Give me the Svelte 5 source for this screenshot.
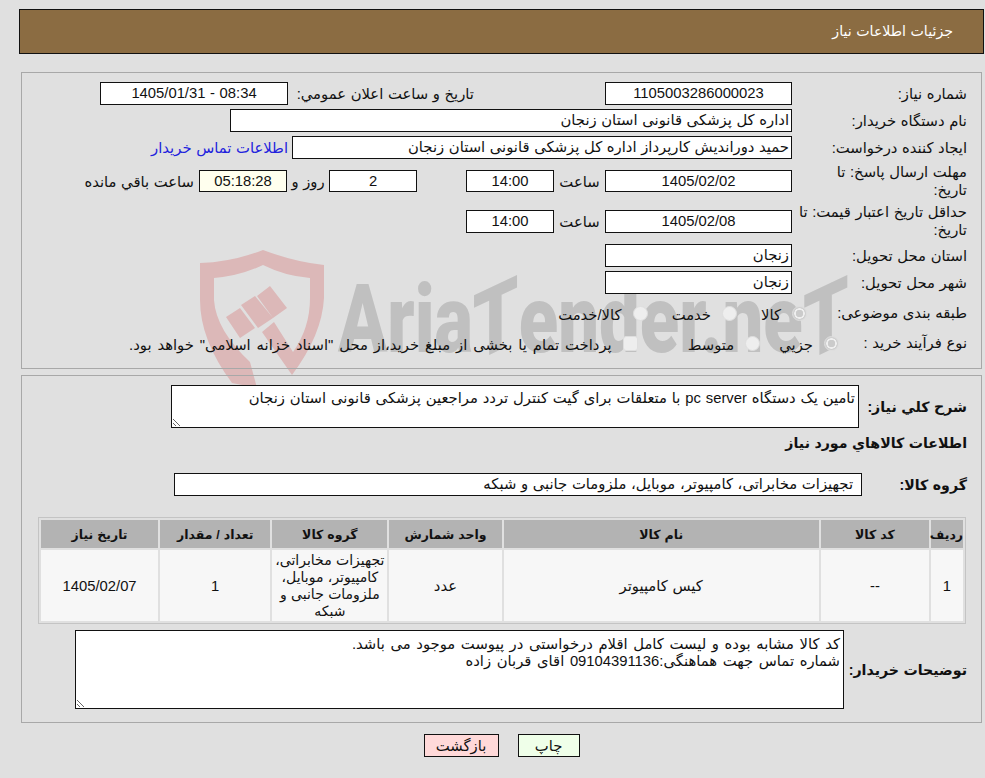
<script>
  const products = [
    {
      row: "1",
      code: "--",
      name: "کیس کامپیوتر",
      unit: "عدد",
      group: "تجهیزات مخابراتی، کامپیوتر، موبایل، ملزومات جانبی و شبکه",
      qty: "1",
      date: "1405/02/07"
    }
  ];
</script>

<main>
  <!-- watermark is behind the form -->
  <div class="mark" aria-hidden="true">
    <svg class="shield" viewBox="195 245 135 150" width="135" height="150">
      <path fill="#dcb8b8" d="M200 263 Q232 262 263 250 Q295 262 324 265 L324 298 Q322 335 292 375 L262 332 L274 322 L293 352 Q310 328 310 298 L310 278 Q285 276 263 265 Q240 276 214 278 L214 300 Q216 330 250 362 L257 388 L232 383 Q200 340 200 300 Z" />
      <path fill="#dcb8b8" d="M226 317 L240 308 L255 328 L240 338 Z M241 305 L255 296 L273 318 L258 328 Z M257 296 L270 286 L287 308 L273 318 Z" />
    </svg>
    <div class="word">Aria<span class="slant">T</span>ender.ne<span class="slant">T</span></div>
  </div>

  <header class="title">جزئیات اطلاعات نیاز</header>

  <section class="panel top">
    <div class="row r1">
      <div class="lbl">شماره نیاز:</div>
      <div class="box w187 c">1105003286000023</div>
      <div class="lbl2">تاریخ و ساعت اعلان عمومي:</div>
      <div class="box w188 c">08:34 - 1405/01/31</div>
    </div>
    <div class="row r1">
      <div class="lbl">نام دستگاه خریدار:</div>
      <div class="box w562">اداره کل پزشکی قانونی استان زنجان</div>
    </div>
    <div class="row r1">
      <div class="lbl">ایجاد کننده درخواست:</div>
      <div class="box w500">حمید دوراندیش کارپرداز اداره کل پزشکی قانونی استان زنجان</div>
      <a href="#contact" class="contact">اطلاعات تماس خریدار</a>
    </div>
    <div class="row r2">
      <div class="lbl">مهلت ارسال پاسخ: تا<br />تاریخ:</div>
      <div class="box w187 c h22">1405/02/02</div>
      <div class="unit">ساعت</div>
      <div class="box w88 c h22">14:00</div>
      <div class="spacer"></div>
      <div class="box w88 c h22">2</div>
      <div class="days">روز و</div>
      <div class="box w88 c h22 clock">05:18:28</div>
      <div class="left">ساعت باقي مانده</div>
    </div>
    <div class="row r2 last2">
      <div class="lbl">حداقل تاریخ اعتبار قیمت: تا<br />تاریخ:</div>
      <div class="box w187 c">1405/02/08</div>
      <div class="unit">ساعت</div>
      <div class="box w88 c">14:00</div>
    </div>
    <div class="row r1">
      <div class="lbl">استان محل تحویل:</div>
      <div class="box w187">زنجان</div>
    </div>
    <div class="row r1 last1">
      <div class="lbl">شهر محل تحویل:</div>
      <div class="box w187">زنجان</div>
    </div>
    <div class="row r3">
      <div class="lbl l8">طبقه بندی موضوعی:</div>
      <label class="opt"><input type="radio" name="cat" checked disabled /><span>کالا</span></label>
      <label class="opt m24"><input type="radio" name="cat" disabled /><span>خدمت</span></label>
      <label class="opt m24"><input type="radio" name="cat" disabled /><span>کالا/خدمت</span></label>
    </div>
    <div class="row r3">
      <div class="lbl l9">نوع فرآیند خرید :</div>
      <label class="opt"><input type="radio" name="kind" checked disabled /><span>جزيي</span></label>
      <label class="opt m19"><input type="radio" name="kind" disabled /><span>متوسط</span></label>
      <label class="opt m50"><input type="checkbox" disabled /><span class="wide">پرداخت تمام یا بخشی از مبلغ خرید،از محل "اسناد خزانه اسلامی" خواهد بود.</span></label>
    </div>
  </section>

  <section class="panel bottom">
    <div class="row desc">
      <div class="lbl b">شرح کلي نياز:</div>
      <textarea class="area a1" readonly>تامین یک دستگاه pc server با متعلقات برای گیت کنترل تردد مراجعین پزشکی قانونی استان زنجان</textarea>
    </div>
    <h3>اطلاعات کالاهاي مورد نياز</h3>
    <div class="row grp">
      <div class="lbl b">گروه کالا:</div>
      <div class="box w688">تجهیزات مخابراتی، کامپیوتر، موبایل، ملزومات جانبی و شبکه</div>
    </div>
    <table>
      <thead>
        <tr>
          <th class="c1">ردیف</th>
          <th class="c2">کد کالا</th>
          <th class="c3">نام کالا</th>
          <th class="c4">واحد شمارش</th>
          <th class="c5">گروه کالا</th>
          <th class="c6">تعداد / مقدار</th>
          <th class="c7">تاریخ نیاز</th>
        </tr>
      </thead>
      <tbody>
        {#each products as p}
          <tr>
            <td>{p.row}</td>
            <td>{p.code}</td>
            <td>{p.name}</td>
            <td>{p.unit}</td>
            <td class="tight">{p.group}</td>
            <td>{p.qty}</td>
            <td>{p.date}</td>
          </tr>
        {/each}
      </tbody>
    </table>
    <div class="row notes">
      <div class="lbl b">توضیحات خریدار:</div>
      <textarea class="area a2" readonly>کد کالا مشابه بوده و لیست کامل اقلام درخواستی در پیوست موجود می باشد.
شماره تماس جهت هماهنگی:09104391136 اقای قربان زاده</textarea>
    </div>
  </section>

  <div class="actions">
    <button class="print">چاپ</button>
    <button class="back">بازگشت</button>
  </div>
</main>

<style>
  :global(body) {
    margin: 0;
    background: #e0e0e0;
  }
  main {
    position: relative;
    z-index: 0;
    height: 778px;
    overflow: hidden;
    padding: 9px 1px 0 19px;
    box-sizing: border-box;
    direction: rtl;
    font-family: "Liberation Sans", "DejaVu Sans", sans-serif;
    font-size: 14.8px;
    word-spacing: 0.5px;
    color: #111;
  }
  .title {
    height: 43px;
    line-height: 43px;
    border: 1px solid #111;
    background: #8b6c42;
    color: #fff;
    padding-right: 30px;
    font-size: 14.2px;
  }
  .panel {
    width: 961px;
    margin-right: 2px;
    border: 1px solid #a8a8a8;
    box-sizing: border-box;
    padding-right: 14px;
  }
  .top {
    margin-top: 18px;
    height: 297px;
    padding-top: 9px;
  }
  .bottom {
    margin-top: 6px;
    height: 348px;
    padding-top: 9px;
  }
  .row {
    display: flex;
    align-items: center;
  }
  .r1 {
    height: 23px;
    margin-bottom: 4px;
  }
  .r2 {
    height: 36px;
    margin-bottom: 4px;
  }
  .last2 {
    margin-bottom: 5px;
  }
  .last1 {
    margin-bottom: 6px;
  }
  .r3 {
    height: 26px;
    margin-bottom: 4px;
  }
  .lbl {
    width: 175px;
    flex: none;
    line-height: 18px;
    white-space: nowrap;
  }
  .lbl.l8 {
    width: 160px;
  }
  .lbl.l9 {
    width: 128px;
  }
  .lbl.b,
  h3 {
    font-weight: bold;
    font-size: 14.2px;
  }
  .lbl2 {
    margin-right: 131px;
    width: 186px;
    flex: none;
    white-space: nowrap;
  }
  .box {
    height: 23px;
    line-height: 21px;
    border: 1px solid #111;
    background: #fff;
    box-sizing: border-box;
    padding: 0 2px;
    flex: none;
    white-space: nowrap;
    overflow: hidden;
  }
  .c {
    text-align: center;
  }
  .h22 {
    height: 22px;
    line-height: 20px;
  }
  .w187 {
    width: 187px;
  }
  .w188 {
    width: 188px;
  }
  .w88 {
    width: 88px;
  }
  .w500 {
    width: 500px;
  }
  .w562 {
    width: 562px;
  }
  .w688 {
    width: 688px;
    margin-right: 15px;
    padding-right: 8px;
  }
  .unit {
    width: 51px;
    text-align: center;
    flex: none;
  }
  .spacer {
    width: 49px;
    flex: none;
  }
  .days {
    width: 42px;
    text-align: center;
    flex: none;
  }
  .clock {
    background: #ffffee;
  }
  .left {
    margin-right: 5px;
    white-space: nowrap;
  }
  .contact {
    color: #2222dd;
    text-decoration: none;
    margin-right: 4px;
    white-space: nowrap;
  }
  .opt {
    display: flex;
    align-items: center;
    gap: 11px;
    white-space: nowrap;
  }
  .m24 {
    margin-right: 24px;
  }
  .m19 {
    margin-right: 19px;
  }
  .m50 {
    margin-right: 50px;
  }
  .opt span {
    padding-top: 3px;
  }
  .opt .wide {
    word-spacing: 1.8px;
  }
  /* disabled inputs show up pale on the grey page */
  .opt input {
    appearance: none;
    margin: 0;
    width: 15px;
    height: 15px;
    box-sizing: border-box;
    background: #eeeeee;
    border: 1px solid #dedede;
    border-radius: 50%;
  }
  .opt input[type="checkbox"] {
    border-radius: 3px;
  }
  .opt input:checked {
    background: radial-gradient(circle, #cbcbcb 0 3.5px, #efefef 4px 5px, #cfcfcf 5.5px 6.5px);
  }
  .desc {
    height: 43px;
  }
  .area {
    border: 1px solid #111;
    background: #fff;
    font: inherit;
    color: inherit;
    margin: 0;
    padding: 3px;
    box-sizing: border-box;
    resize: both;
    overflow: hidden;
    outline: none;
  }
  .a1 {
    width: 688px;
    height: 43px;
    word-spacing: 0.75px;
  }
  .desc .lbl {
    width: 108px;
  }
  h3 {
    margin: 0;
    height: 30px;
    line-height: 30px;
  }
  .grp {
    margin-top: 15px;
    height: 23px;
  }
  .grp .lbl {
    width: 90px;
  }
  table {
    margin-top: 21px;
    margin-right: 1px;
    width: 928px;
    table-layout: fixed;
    border-collapse: separate;
    border-spacing: 2px;
    border: 1px solid #c4c4c4;
  }
  th {
    height: 28px;
    padding: 0;
    background: #b3b3b3;
    font-weight: bold;
    font-size: 12.5px;
    white-space: nowrap;
  }
  td {
    height: 71px;
    padding: 0;
    background: #f7f7f7;
    text-align: center;
  }
  .tight {
    line-height: 17px;
    font-size: 14px;
  }
  .c1 { width: 32px; }
  .c2 { width: 108px; }
  .c3 { width: 315px; }
  .c4 { width: 112px; }
  .c5 { width: 115px; }
  .c6 { width: 110px; }
  .c7 { width: 117px; }
  .notes {
    margin-top: 6px;
    height: 79px;
  }
  .notes .lbl {
    width: 123px;
  }
  .a2 {
    width: 769px;
    height: 79px;
    line-height: 17px;
    padding-top: 5px;
    word-spacing: 1.5px;
  }
  .actions {
    display: flex;
    justify-content: center;
    gap: 19px;
    margin: 11px 2px 0 0;
    width: 961px;
  }
  button {
    height: 23px;
    border: 1px solid #111;
    font: inherit;
    color: inherit;
    padding: 0;
  }
  .print {
    width: 62px;
    background: #efffe9;
  }
  .back {
    width: 75px;
    background: #ffd9d9;
  }
  .mark {
    position: absolute;
    left: 0;
    top: 0;
    z-index: -1;
    direction: ltr;
  }
  .shield {
    position: absolute;
    left: 195px;
    top: 245px;
  }
  .word {
    position: absolute;
    left: 338px;
    top: 273px;
    font-family: Roboto, "Liberation Sans", sans-serif;
    font-weight: 900;
    font-size: 94px;
    line-height: 1;
    color: #c0c0c0;
    white-space: nowrap;
    transform-origin: left top;
    transform: scaleX(0.77);
  }
  .slant {
    display: inline-block;
    transform: skewY(-20deg);
  }
</style>
